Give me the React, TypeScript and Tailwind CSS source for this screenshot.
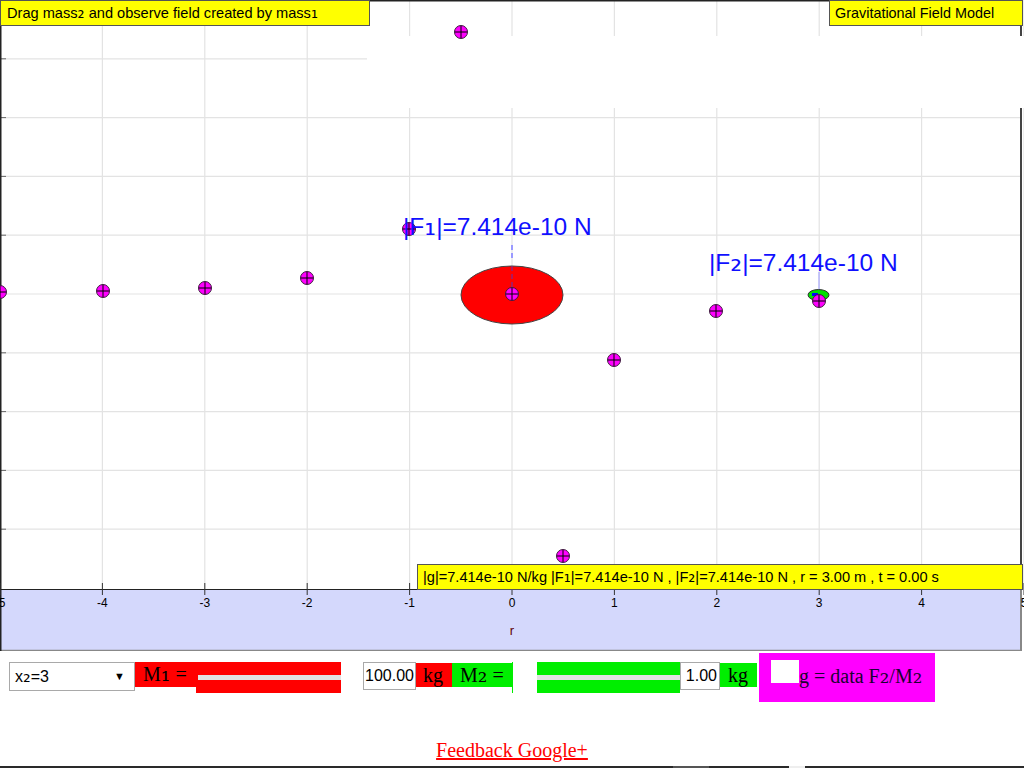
import React from "react";

const XS = [0, 102.4, 204.8, 307.2, 409.6, 512, 614.4, 716.8, 819.2, 921.6, 1024];
const YS = [58.8, 117.6, 176.4, 235.2, 294, 352.8, 411.6, 470.4, 529.2];
const LABELS = ["-5", "-4", "-3", "-2", "-1", "0", "1", "2", "3", "4", "5"];
const PTS: [number, number][] = [
  [0, 292],
  [103, 291],
  [205, 288],
  [307, 278],
  [409, 229],
  [461, 32],
  [512, 294],
  [563, 556],
  [614, 360],
  [716, 311],
  [819, 301],
];

function S({ c }: { c: string }) {
  return <span className="font-['DejaVu_Sans',sans-serif] text-[1.2em] leading-[0]">{c}</span>;
}
function SS({ c }: { c: string }) {
  return <span className="font-['DejaVu_Serif',serif] text-[1.2em] leading-[0]">{c}</span>;
}

function Point({ x, y }: { x: number; y: number }) {
  return (
    <g>
      <circle cx={x} cy={y} r={6.5} fill="#ff00ff" stroke="#3a1a3a" strokeWidth={1} />
      <line x1={x - 6} y1={y} x2={x + 6} y2={y} stroke="#000" strokeWidth={1} />
      <line x1={x} y1={y - 6} x2={x} y2={y + 6} stroke="#000" strokeWidth={1} />
    </g>
  );
}

function Plot() {
  return (
    <div className="relative w-[1024px] h-[651px] overflow-hidden">
      <svg width={1024} height={651} className="block">
        <rect x={0} y={0} width={1022} height={589} fill="#ffffff" />
        {XS.map((x, i) => (
          <line key={"v" + i} x1={x} y1={0} x2={x} y2={589} stroke="#e3e3e3" strokeWidth={1.2} />
        ))}
        {YS.map((y, i) => (
          <line key={"h" + i} x1={0} y1={y} x2={1022} y2={y} stroke="#e3e3e3" strokeWidth={1.2} />
        ))}
        {YS.map((y, i) => (
          <line key={"t" + i} x1={0} y1={y} x2={6} y2={y} stroke="#666" strokeWidth={1} />
        ))}
        <line x1={0} y1={0.75} x2={1022} y2={0.75} stroke="#222" strokeWidth={1.5} />
        <line x1={0.75} y1={0} x2={0.75} y2={589} stroke="#222" strokeWidth={1.5} />
        <line x1={1021} y1={0} x2={1021} y2={589} stroke="#444" strokeWidth={2} />
        <rect x={367} y={36} width={657} height={72} fill="#ffffff" />
        <rect x={0} y={589} width={1022} height={62} fill="#d4d8fc" />
        <line x1={0} y1={650.5} x2={1022} y2={650.5} stroke="#888" strokeWidth={1.5} />
        <line x1={1021} y1={589} x2={1021} y2={651} stroke="#888" strokeWidth={2} />
        <line x1={0.75} y1={589} x2={0.75} y2={651} stroke="#222" strokeWidth={1.5} />
        <line x1={0} y1={589.5} x2={1022} y2={589.5} stroke="#222" strokeWidth={1.2} />
        {XS.map((x, i) => (
          <line key={"xt" + i} x1={x} y1={583} x2={x} y2={595} stroke="#333" strokeWidth={1} />
        ))}
        {XS.map((x, i) => (
          <text
            key={"xl" + i}
            x={x}
            y={607}
            textAnchor="middle"
            fontFamily="'Liberation Sans', Arial, sans-serif"
            fontSize={12}
            fill="#000"
          >
            {LABELS[i]}
          </text>
        ))}
        <text x={512} y={635} textAnchor="middle" fontFamily="'Liberation Sans', Arial, sans-serif" fontSize={13} fill="#600000">
          r
        </text>
        <ellipse cx={512} cy={295} rx={51} ry={29} fill="#ff0000" stroke="#444" strokeWidth={1} />
        <line x1={512} y1={245} x2={512} y2={260} stroke="#9a9aff" strokeWidth={2} strokeDasharray="5 3" />
        <line x1={512} y1={266} x2={512} y2={290} stroke="#7a2a9a" strokeWidth={2} strokeDasharray="5 3" opacity={0.6} />
        <line x1={819} y1={272} x2={819} y2={290} stroke="#9a9aff" strokeWidth={1} />
        <ellipse cx={818.5} cy={295} rx={10.5} ry={5.5} fill="#00e000" stroke="#333" strokeWidth={1} />
        <rect x={812} y={293} width={6} height={3} fill="#0000ff" />
        {PTS.map(([x, y], i) => (
          <Point key={"p" + i} x={x} y={y} />
        ))}
      </svg>

      <div className="absolute left-0 top-0 w-[370px] h-[26px] bg-[#ffff00] border border-[#555] pl-[6px] text-[14.6px] leading-[24px] text-black font-['Liberation_Sans',Arial,sans-serif] whitespace-nowrap">
        Drag mass<S c="₂" /> and observe field created by mass<S c="₁" />
      </div>
      <div className="absolute left-[829px] top-0 w-[194px] h-[26px] bg-[#ffff00] border border-[#555] pl-[5px] text-[14.4px] leading-[24px] text-black font-['Liberation_Sans',Arial,sans-serif] whitespace-nowrap">
        Gravitational Field Model
      </div>

      <div className="absolute left-[403px] top-[212px] text-[24.5px] leading-[29px] text-[#1010ff] font-['Liberation_Sans',Arial,sans-serif] whitespace-nowrap">
        |F<S c="₁" />|=7.414e-10 N
      </div>
      <div className="absolute left-[709px] top-[248px] text-[24.5px] leading-[29px] text-[#1010ff] font-['Liberation_Sans',Arial,sans-serif] whitespace-nowrap">
        |F<S c="₂" />|=7.414e-10 N
      </div>

      <div className="absolute left-[417px] top-[564px] w-[606px] h-[26px] bg-[#ffff00] border border-[#555] pl-[5px] text-[14.6px] leading-[25px] text-black font-['Liberation_Sans',Arial,sans-serif] whitespace-nowrap">
        |g|=7.414e-10 N/kg |F<S c="₁" />|=7.414e-10 N , |F<S c="₂" />|=7.414e-10 N , r = 3.00 m , t = 0.00 s
      </div>
    </div>
  );
}

function Controls() {
  return (
    <div className="flex items-start mt-[2px] h-[49px] text-black">
      <div className="ml-[9px] mt-[9px] w-[126px] h-[29px] border border-[#a9a9a9] bg-white flex items-center justify-between pl-[5px] pr-[9px] text-[16px] font-['Liberation_Sans',Arial,sans-serif]">
        <span>
          x<S c="₂" />=3
        </span>
        <span className="text-[11px]">▼</span>
      </div>
      <div className="mt-[9px] w-[61px] h-[25px] bg-[#ff0000] pl-[8px] text-[20px] leading-[25px] font-['Liberation_Serif','Times_New_Roman',serif] whitespace-nowrap">
        M<SS c="₁" /> =
      </div>
      <div className="mt-[9px] w-[145px] h-[31px] bg-[#ff0000] flex items-center pl-[2px]">
        <div className="h-[5px] w-full bg-[#e2e2e2]" />
      </div>
      <div className="ml-[22px] mt-[9px] w-[53px] h-[28px] border border-[#a9a9a9] bg-white flex items-center justify-end pr-[1px] text-[16px] font-['Liberation_Sans',Arial,sans-serif]">
        100.00
      </div>
      <div className="mt-[10px] w-[36px] h-[24px] bg-[#ff0000] pl-[7px] text-[20px] leading-[24px] font-['Liberation_Serif','Times_New_Roman',serif]">
        kg
      </div>
      <div className="mt-[10px] w-[60px] h-[24px] bg-[#00ee00] pl-[8px] text-[20px] leading-[24px] font-['Liberation_Serif','Times_New_Roman',serif] whitespace-nowrap">
        M<SS c="₂" /> =
      </div>
      <div className="mt-[9px] w-[1px] h-[31px] bg-[#00ee00]" />
      <div className="ml-[24px] mt-[9px] w-[143px] h-[31px] bg-[#00ee00] flex items-center">
        <div className="h-[5px] w-full bg-[#e2e2e2]" />
      </div>
      <div className="mt-[9px] w-[40px] h-[28px] border border-[#a9a9a9] bg-white flex items-center justify-end pr-[2px] text-[16px] font-['Liberation_Sans',Arial,sans-serif]">
        1.00
      </div>
      <div className="mt-[10px] w-[37px] h-[24px] bg-[#00ee00] pl-[8px] text-[20px] leading-[24px] font-['Liberation_Serif','Times_New_Roman',serif]">
        kg
      </div>
      <div className="ml-[2px] w-[176px] h-[49px] bg-[#ff00ff] flex items-start pl-[12px] pt-[7px]">
        <div className="w-[28px] h-[23px] bg-white" />
        <div className="mt-[4px] text-[20px] leading-[25px] text-[#1a0033] font-['Liberation_Serif','Times_New_Roman',serif] whitespace-nowrap">
          g = data F<SS c="₂" />/M<SS c="₂" />
        </div>
      </div>
    </div>
  );
}

export default function App() {
  return (
    <div className="w-[1024px] h-[768px] bg-white overflow-hidden flex flex-col">
      <Plot />
      <Controls />
      <div className="mt-[37px] h-[23px] text-center text-[20px] leading-[23px] font-['Liberation_Serif','Times_New_Roman',serif]">
        <a href="#" className="text-[#ff0000] underline">
          Feedback Google+
        </a>
      </div>
      <div className="mt-[4px] h-[2px] flex">
        <div className="w-[673px] bg-[#2a2a2a]" />
        <div className="w-[36px] bg-[#555]" />
        <div className="w-[80px] bg-[#2a2a2a]" />
        <div className="w-[16px] bg-[#eee]" />
        <div className="flex-1 bg-[#2a2a2a]" />
      </div>
    </div>
  );
}
